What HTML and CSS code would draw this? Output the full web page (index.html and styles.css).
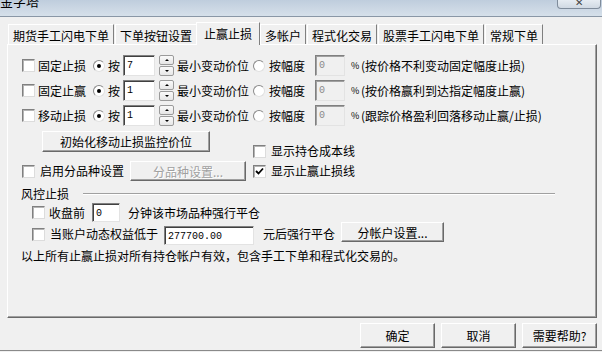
FILE: index.html
```html
<!DOCTYPE html>
<html lang="zh-CN">
<head>
    <meta charset="UTF-8">
    <title>金字塔</title>
    <link rel="stylesheet" href="styles.css">
</head>
<body>

    <!-- Title bar -->
    <div class="titlebar">
        <span class="title">金字塔</span>
        <span class="close-btn">✕</span>
    </div>

    <!-- Tabs -->
    <div class="tabs">
        <div class="tab">期货手工闪电下单</div>
        <div class="tab">下单按钮设置</div>
        <div class="tab active">止赢止损</div>
        <div class="tab">多帐户</div>
        <div class="tab">程式化交易</div>
        <div class="tab">股票手工闪电下单</div>
        <div class="tab">常规下单</div>
    </div>

    <div class="panel">

        <!-- Stop rows -->
        <div class="stop-rows">
            <div class="stop-row">
                <span class="check"></span>
                <span class="name">固定止损</span>
                <span class="radio on"></span>
                <span class="by">按</span>
                <span class="field num">7</span>
                <span class="spin"><i class="up"></i><i class="down"></i></span>
                <span class="unit">最小变动价位</span>
                <span class="radio"></span>
                <span class="range">按幅度</span>
                <span class="field pct-box disabled">0</span>
                <span class="pct">%</span>
                <span class="note">(按价格不利变动固定幅度止损)</span>
            </div>
            <div class="stop-row">
                <span class="check"></span>
                <span class="name">固定止赢</span>
                <span class="radio on"></span>
                <span class="by">按</span>
                <span class="field num">1</span>
                <span class="spin"><i class="up"></i><i class="down"></i></span>
                <span class="unit">最小变动价位</span>
                <span class="radio"></span>
                <span class="range">按幅度</span>
                <span class="field pct-box disabled">0</span>
                <span class="pct">%</span>
                <span class="note">(按价格赢利到达指定幅度止赢)</span>
            </div>
            <div class="stop-row">
                <span class="check"></span>
                <span class="name">移动止损</span>
                <span class="radio on"></span>
                <span class="by">按</span>
                <span class="field num">1</span>
                <span class="spin"><i class="up"></i><i class="down"></i></span>
                <span class="unit">最小变动价位</span>
                <span class="radio"></span>
                <span class="range">按幅度</span>
                <span class="field pct-box disabled">0</span>
                <span class="pct">%</span>
                <span class="note">(跟踪价格盈利回落移动止赢/止损)</span>
            </div>
        </div>

        <!-- Extra options -->
        <div class="extra">
            <div class="extra-left">
                <button class="btn init-btn">初始化移动止损监控价位</button>
                <div class="line">
                    <span class="check"></span>
                    <span class="line-text">启用分品种设置</span>
                    <button class="btn variety-btn" disabled>分品种设置...</button>
                </div>
            </div>
            <div class="extra-right">
                <div class="line">
                    <span class="check"></span>
                    <span class="line-text">显示持仓成本线</span>
                </div>
                <div class="line">
                    <span class="check on">
                        <svg width="9" height="9" viewBox="0 0 9 9"><path d="M1 4 L3.5 6.5 L8 1.5" fill="none" stroke="#000" stroke-width="1.8"/></svg>
                    </span>
                    <span class="line-text">显示止赢止损线</span>
                </div>
            </div>
        </div>

        <!-- Risk control group -->
        <div class="group-head">
            <span>风控止损</span>
            <span class="rule"></span>
        </div>
        <div class="risk">
            <div class="risk-row close-row">
                <span class="check"></span>
                <span class="risk-text">收盘前</span>
                <span class="field minutes">0</span>
                <span class="risk-tail">分钟该市场品种强行平仓</span>
            </div>
            <div class="risk-row equity-row">
                <span class="check"></span>
                <span class="risk-text">当账户动态权益低于</span>
                <span class="field equity">277700.00</span>
                <span class="risk-tail">元后强行平仓</span>
                <button class="btn account-btn">分帐户设置...</button>
            </div>
        </div>
        <p class="footnote">以上所有止赢止损对所有持仓帐户有效，包含手工下单和程式化交易的。</p>
    </div>

    <!-- Dialog buttons -->
    <div class="actions">
        <button class="btn action-btn">确定</button>
        <button class="btn action-btn">取消</button>
        <button class="btn action-btn">需要帮助?</button>
    </div>
    <div class="bottom-line"></div>

</body>
</html>
```

FILE: styles.css
```css
/* Reset */
* {
    margin: 0;
    padding: 0;
    box-sizing: border-box;
}

body {
    width: 602px;
    height: 352px;
    overflow: hidden;
    background-color: #f0f0f0;
    font-family: "Noto Sans CJK SC", sans-serif;
    font-size: 12px;
    line-height: 14px;
    color: #000;
}

/* Title bar */
.titlebar {
    height: 17px;
    display: flex;
    justify-content: space-between;
    align-items: flex-start;
    overflow: hidden;
    background: linear-gradient(#bfcddd, #d6e0ea);
    border-bottom: 1px solid #8a97a6;
}

.title {
    margin-top: -6px;
    font-size: 13px;
}

.close-btn {
    width: 44px;
    height: 9px;
    margin-right: 1px;
    border: 1px solid #7f8c9b;
    border-top: none;
    border-radius: 0 0 4px 4px;
    background: linear-gradient(#e6ecf2, #d0d9e3);
    font-size: 10px;
    line-height: 4px;
    text-align: center;
    color: #444;
    overflow: hidden;
}

/* Tabs */
.tabs {
    height: 27px;
    display: flex;
    align-items: flex-end;
    padding-left: 8px;
}

.tab {
    height: 20px;
    padding: 3px 4px 0;
    margin-right: 1px;
    border-top: 1px solid #fff;
    border-left: 1px solid #fff;
    border-right: 1px solid #7f7f7f;
    line-height: 15px;
    white-space: nowrap;
}

.tab.active {
    height: 23px;
    padding: 3px 7px 0;
    margin: 0 0 -1px -2px;
    background-color: #f0f0f0;
    z-index: 1;
}

/* Tab panel */
.panel {
    width: 590px;
    height: 274px;
    margin-left: 7px;
    padding: 10px 0 0 14px;
    border: 1px solid;
    border-color: #fff #696969 #696969 #fff;
    box-shadow: inset -1px -1px 0 #a0a0a0;
}

/* Common controls */
.check {
    width: 13px;
    height: 13px;
    flex-shrink: 0;
    display: flex;
    align-items: center;
    justify-content: center;
    background-color: #fff;
    border: 1px solid;
    border-color: #808080 #dcdcdc #dcdcdc #808080;
    box-shadow: inset 1px 1px 0 #b4b4b4;
}

.radio {
    width: 12px;
    height: 12px;
    flex-shrink: 0;
    display: flex;
    align-items: center;
    justify-content: center;
    border-radius: 50%;
    background-color: #fff;
    border: 1px solid;
    border-color: #8a8a8a #e0e0e0 #e0e0e0 #8a8a8a;
}

.radio.on::after {
    content: "";
    width: 4px;
    height: 4px;
    border-radius: 50%;
    background-color: #000;
}

.field {
    height: 21px;
    flex-shrink: 0;
    padding: 3px 0 0 3px;
    background-color: #fff;
    border: 1px solid;
    border-color: #808080 #e3e3e3 #e3e3e3 #808080;
    box-shadow: inset 1px 1px 0 #404040;
    font-family: "Liberation Mono", monospace;
    font-size: 10px;
    line-height: 13px;
}

.field.disabled {
    background-color: #f0f0f0;
    color: #8a8a8a;
    box-shadow: inset 1px 1px 0 #a0a0a0;
}

.btn {
    height: 21px;
    font-family: "Noto Sans CJK SC", sans-serif;
    font-size: 12px;
    color: #000;
    background-color: #f0f0f0;
    border: 1px solid;
    border-color: #fff #696969 #696969 #fff;
    box-shadow: inset -1px -1px 0 #a0a0a0;
}

.btn:disabled {
    color: #a0a0a0;
    text-shadow: 1px 1px 0 #fff;
}

/* Stop rows */
.stop-rows {
    display: flex;
    flex-direction: column;
    gap: 4px;
}

.stop-row {
    height: 21px;
    display: flex;
    align-items: center;
    white-space: nowrap;
}

.stop-row .check { margin-right: 3px; }
.stop-row .name { width: 48px; margin-right: 7px; }
.stop-row .radio { margin-right: 3px; }
.stop-row .by { margin-right: 3px; }
.field.num { width: 32px; margin-right: 4px; }

.spin {
    width: 15px;
    height: 21px;
    margin-right: 3px;
    display: flex;
    flex-direction: column;
    gap: 1px;
}

.spin i {
    flex: 1;
    display: flex;
    align-items: center;
    justify-content: center;
    border: 1px solid #9a9a9a;
    border-radius: 2px;
    background: linear-gradient(#fafafa, #e6e6e6);
}

.spin i::after {
    content: "";
    width: 0;
    height: 0;
    border-left: 2px solid transparent;
    border-right: 2px solid transparent;
}

.spin .up::after { border-bottom: 2px solid #000; }
.spin .down::after { border-top: 2px solid #000; }

.stop-row .unit { margin-right: 4px; }
.stop-row .range { margin: 0 10px 0 1px; }
.field.pct-box { width: 30px; margin-right: 6px; }

.pct {
    width: 6px;
    margin-right: 4px;
    font-size: 9px;
}

/* Extra options */
.extra {
    display: flex;
    margin-top: 5px;
}

.extra-left {
    width: 231px;
}

.init-btn {
    width: 168px;
    margin-left: 20px;
}

.line {
    height: 20px;
    display: flex;
    align-items: center;
    white-space: nowrap;
}

.extra-left .line {
    margin-top: 9px;
}

.line-text {
    margin-left: 5px;
}

.variety-btn {
    width: 116px;
    height: 20px;
    margin-left: 6px;
}

.extra-right {
    padding-top: 10px;
}

/* Risk control */
.group-head {
    height: 16px;
    display: flex;
    align-items: center;
    margin: 5px 0 0 -1px;
}

.group-head .rule {
    flex: 1;
    margin: 0 41px 0 14px;
    border-top: 1px solid #a0a0a0;
    border-bottom: 1px solid #fff;
}

.risk {
    padding-left: 10px;
}

.risk-row {
    display: flex;
    align-items: center;
    white-space: nowrap;
}

.risk-text {
    margin-left: 4px;
}

.close-row {
    height: 19px;
    margin-top: 1px;
}

.field.minutes {
    width: 28px;
    height: 19px;
    margin: 0 8px 0 7px;
}

.equity-row {
    height: 24px;
}

.equity-row .risk-text {
    margin-left: 5px;
}

.field.equity {
    width: 90px;
    height: 19px;
    margin: 0 9px 1px 6px;
    align-self: flex-end;
}

.account-btn {
    width: 103px;
    height: 20px;
    margin-left: 6px;
    align-self: flex-start;
}

.footnote {
    margin: 3px 0 0 -1px;
    white-space: nowrap;
}

/* Dialog buttons */
.actions {
    display: flex;
    justify-content: flex-end;
    gap: 6px;
    margin: 5px 5px 0 0;
}

.action-btn {
    width: 75px;
    height: 25px;
}

.bottom-line {
    margin-top: 2px;
    border-top: 1px solid #8a8a8a;
}
```
